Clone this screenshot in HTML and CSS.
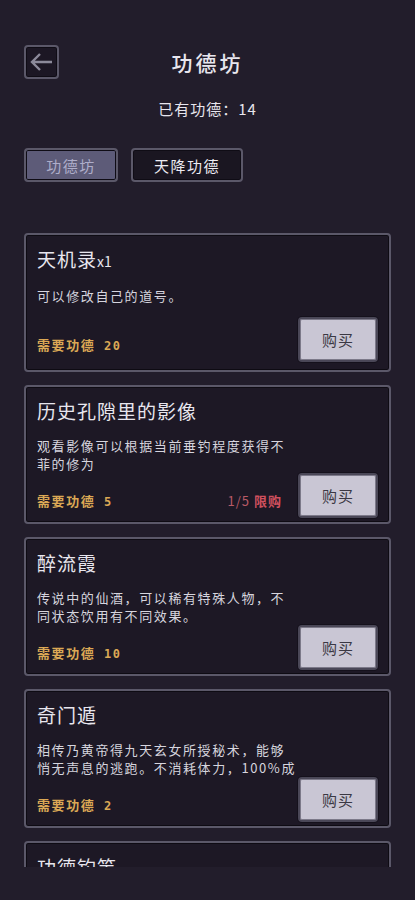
FILE: index.html
```html
<!DOCTYPE html>
<html lang="zh">

<head>
    <meta charset="utf-8">
    <meta name="viewport" content="width=device-width, initial-scale=1.0">
    <title>功德坊</title>
    <link rel="stylesheet" href="styles.css">
</head>

<body>
    <header class="top">
        <button class="tilbage">
            <svg width="31" height="30" viewBox="0 0 31 30">
                <path d="M6 15 H26 M14 7 L6 15 L14 23" fill="none" stroke="#8c8a9a" stroke-width="2.4" />
            </svg>
        </button>
        <h1 class="overskrift">功德坊</h1>
        <span></span>
    </header>

    <p class="merit">已有功德：14</p>

    <nav class="menu">
        <button class="fane valgt">功德坊</button>
        <button class="fane">天降功德</button>
    </nav>

    <main>
        <section id="liste">
            <article class="vare">
                <h2>天机录<small>x1</small></h2>
                <p class="tekst">可以修改自己的道号。</p>
                <div class="bund">
                    <span class="pris">需要功德 <b>20</b></span>
                    <button class="koeb">购买</button>
                </div>
            </article>
            <article class="vare">
                <h2>历史孔隙里的影像</h2>
                <p class="tekst">观看影像可以根据当前垂钓程度获得不菲的修为</p>
                <div class="bund">
                    <span class="pris">需要功德 <b>5</b></span>
                    <span class="graense">1/5 <em>限购</em></span>
                    <button class="koeb">购买</button>
                </div>
            </article>
            <article class="vare">
                <h2>醉流霞</h2>
                <p class="tekst">传说中的仙酒，可以稀有特殊人物，不同状态饮用有不同效果。</p>
                <div class="bund">
                    <span class="pris">需要功德 <b>10</b></span>
                    <button class="koeb">购买</button>
                </div>
            </article>
            <article class="vare">
                <h2>奇门遁</h2>
                <p class="tekst">相传乃黄帝得九天玄女所授秘术，能够悄无声息的逃跑。不消耗体力，100%成</p>
                <div class="bund">
                    <span class="pris">需要功德 <b>2</b></span>
                    <button class="koeb">购买</button>
                </div>
            </article>
            <article class="vare">
                <h2>功德钓竿</h2>
            </article>
        </section>
    </main>
</body>

</html>
```

FILE: styles.css
```css
body {
    margin: 0;
    height: 900px;
    background: #221d2b;
    color: #e8e6ee;
    font-family: "Noto Sans CJK SC", "Noto Sans", sans-serif;
}

button {
    font-family: inherit;
    cursor: pointer;
}

.top {
    display: grid;
    grid-template-columns: 35px 1fr 35px;
    align-items: center;
    padding: 45px 24px 0;
}

.tilbage {
    width: 35px;
    height: 34px;
    padding: 0;
    display: flex;
    align-items: center;
    justify-content: center;
    background: #1c1724;
    border: 2px solid #5b5869;
    border-radius: 4px;
    box-shadow: inset 0 0 0 1px #0f0c15;
}

.overskrift {
    margin: 0;
    text-align: center;
    font-size: 21px;
    font-weight: 500;
    letter-spacing: 3px;
    line-height: 34px;
}

.merit {
    margin: 20px 0 0;
    text-align: center;
    font-size: 15px;
    line-height: 20px;
    letter-spacing: 1px;
}

.menu {
    display: flex;
    gap: 13px;
    margin: 29px 24px 0;
}

.fane {
    height: 34px;
    padding: 0 21px;
    font-size: 15px;
    letter-spacing: 1.5px;
    color: #ecebf2;
    background: #1a1621;
    border: 2px solid #5b5869;
    border-radius: 4px;
    box-shadow: inset 0 0 0 1px #0f0c15;
}

.fane.valgt {
    width: 94px;
    padding: 0;
    color: #aeadca;
    background: #5d5b78;
}

#liste {
    display: flex;
    flex-direction: column;
    gap: 13px;
    margin: 51px 24px 0;
    height: 634px;
    overflow: hidden;
}

.vare {
    flex: none;
    box-sizing: border-box;
    height: 139px;
    display: flex;
    flex-direction: column;
    padding: 12px 11px 8px 11px;
    background: #1d1825;
    border: 2px solid #5b5869;
    border-radius: 4px;
    box-shadow: inset 0 0 0 1px #0e0b13;
}

.vare h2 {
    margin: 0;
    font-size: 19px;
    font-weight: 400;
    line-height: 24px;
    letter-spacing: 1px;
}

.vare h2 small {
    font-size: 14px;
    letter-spacing: 0;
}

.tekst {
    margin: 14px 0 0;
    width: 262px;
    font-size: 13px;
    line-height: 18px;
    letter-spacing: 1.6px;
    color: #d6d5de;
}

.bund {
    margin-top: auto;
    display: flex;
    align-items: center;
}

.pris {
    flex: 1;
    padding-top: 10px;
    font-size: 13px;
    letter-spacing: 1.6px;
    color: #dba855;
    font-weight: 700;
}

.pris b {
    font-family: "DejaVu Sans Mono", monospace;
    font-size: 12px;
    margin-left: 4px;
}

.graense {
    padding-top: 10px;
    margin-right: 16px;
    font-size: 13px;
    color: #b85a66;
    letter-spacing: 1px;
}

.graense em {
    font-style: normal;
    color: #d0505e;
    font-weight: 700;
}

.koeb {
    width: 80px;
    height: 45px;
    font-size: 15px;
    letter-spacing: 1px;
    color: #3a3843;
    background: #c9c6d4;
    border: 2px solid #4a4757;
    border-radius: 4px;
    box-shadow: inset 0 0 0 1px #7c7989, 0 0 0 1px #15111c;
}
```
